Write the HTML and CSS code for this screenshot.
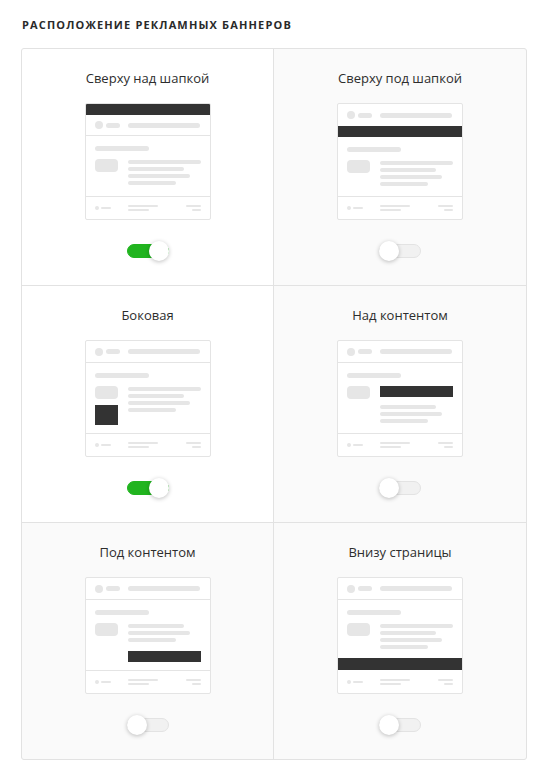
FILE: index.html
```html
<!DOCTYPE html>
<html lang="ru">
<head>
  <meta charset="UTF-8">
  <meta name="viewport" content="width=device-width, initial-scale=1.0">
  <title>Расположение рекламных баннеров</title>
  <link rel="stylesheet" href="styles.css">
</head>
<body>
  <h2 class="section-title">Расположение рекламных баннеров</h2>

  <div class="places">
    <!-- Сверху над шапкой -->
    <div class="place active">
      <div class="place-name">Сверху над шапкой</div>
      <div class="mock">
        <div class="ad ad-top"></div>
        <div class="mock-head">
          <span class="dot"></span><span class="bar bar-logo"></span><span class="bar bar-nav"></span>
        </div>
        <div class="mock-body">
          <span class="bar bar-title"></span>
          <div class="mock-row">
            <span class="thumb"></span>
            <div class="lines">
              <span class="bar l1"></span><span class="bar l2"></span><span class="bar l3"></span><span class="bar l4"></span>
            </div>
          </div>
        </div>
        <div class="mock-foot">
          <span class="fdot"></span><span class="fbar fb-logo"></span>
          <div class="fcol"><span class="fbar fb-a"></span><span class="fbar fb-b"></span></div>
          <div class="fcol fcol-right"><span class="fbar fb-c"></span><span class="fbar fb-d"></span></div>
        </div>
      </div>
      <div class="toggle on"><span class="knob"></span></div>
    </div>

    <!-- Сверху под шапкой -->
    <div class="place">
      <div class="place-name">Сверху под шапкой</div>
      <div class="mock">
        <div class="mock-head no-line">
          <span class="dot"></span><span class="bar bar-logo"></span><span class="bar bar-nav"></span>
        </div>
        <div class="ad ad-top"></div>
        <div class="mock-body">
          <span class="bar bar-title"></span>
          <div class="mock-row">
            <span class="thumb"></span>
            <div class="lines">
              <span class="bar l1"></span><span class="bar l2"></span><span class="bar l3"></span><span class="bar l4"></span>
            </div>
          </div>
        </div>
        <div class="mock-foot">
          <span class="fdot"></span><span class="fbar fb-logo"></span>
          <div class="fcol"><span class="fbar fb-a"></span><span class="fbar fb-b"></span></div>
          <div class="fcol fcol-right"><span class="fbar fb-c"></span><span class="fbar fb-d"></span></div>
        </div>
      </div>
      <div class="toggle"><span class="knob"></span></div>
    </div>

    <!-- Боковая -->
    <div class="place active">
      <div class="place-name">Боковая</div>
      <div class="mock">
        <div class="mock-head">
          <span class="dot"></span><span class="bar bar-logo"></span><span class="bar bar-nav"></span>
        </div>
        <div class="mock-body">
          <span class="bar bar-title"></span>
          <div class="mock-row">
            <div class="side">
              <span class="thumb"></span>
              <span class="ad ad-side"></span>
            </div>
            <div class="lines">
              <span class="bar l1"></span><span class="bar l2"></span><span class="bar l3"></span><span class="bar l4"></span>
            </div>
          </div>
        </div>
        <div class="mock-foot">
          <span class="fdot"></span><span class="fbar fb-logo"></span>
          <div class="fcol"><span class="fbar fb-a"></span><span class="fbar fb-b"></span></div>
          <div class="fcol fcol-right"><span class="fbar fb-c"></span><span class="fbar fb-d"></span></div>
        </div>
      </div>
      <div class="toggle on"><span class="knob"></span></div>
    </div>

    <!-- Над контентом -->
    <div class="place">
      <div class="place-name">Над контентом</div>
      <div class="mock">
        <div class="mock-head">
          <span class="dot"></span><span class="bar bar-logo"></span><span class="bar bar-nav"></span>
        </div>
        <div class="mock-body">
          <span class="bar bar-title"></span>
          <div class="mock-row">
            <span class="thumb"></span>
            <div class="lines">
              <span class="ad ad-content"></span>
              <span class="bar l2"></span><span class="bar l3"></span><span class="bar l4"></span>
            </div>
          </div>
        </div>
        <div class="mock-foot">
          <span class="fdot"></span><span class="fbar fb-logo"></span>
          <div class="fcol"><span class="fbar fb-a"></span><span class="fbar fb-b"></span></div>
          <div class="fcol fcol-right"><span class="fbar fb-c"></span><span class="fbar fb-d"></span></div>
        </div>
      </div>
      <div class="toggle"><span class="knob"></span></div>
    </div>

    <!-- Под контентом -->
    <div class="place">
      <div class="place-name">Под контентом</div>
      <div class="mock">
        <div class="mock-head">
          <span class="dot"></span><span class="bar bar-logo"></span><span class="bar bar-nav"></span>
        </div>
        <div class="mock-body">
          <span class="bar bar-title"></span>
          <div class="mock-row">
            <span class="thumb"></span>
            <div class="lines">
              <span class="bar l2"></span><span class="bar l3"></span><span class="bar l4"></span>
              <span class="ad ad-under"></span>
            </div>
          </div>
        </div>
        <div class="mock-foot">
          <span class="fdot"></span><span class="fbar fb-logo"></span>
          <div class="fcol"><span class="fbar fb-a"></span><span class="fbar fb-b"></span></div>
          <div class="fcol fcol-right"><span class="fbar fb-c"></span><span class="fbar fb-d"></span></div>
        </div>
      </div>
      <div class="toggle"><span class="knob"></span></div>
    </div>

    <!-- Внизу страницы -->
    <div class="place">
      <div class="place-name">Внизу страницы</div>
      <div class="mock">
        <div class="mock-head">
          <span class="dot"></span><span class="bar bar-logo"></span><span class="bar bar-nav"></span>
        </div>
        <div class="mock-body">
          <span class="bar bar-title"></span>
          <div class="mock-row">
            <span class="thumb"></span>
            <div class="lines">
              <span class="bar l1"></span><span class="bar l2"></span><span class="bar l3"></span><span class="bar l4"></span>
            </div>
          </div>
        </div>
        <div class="ad ad-bottom"></div>
        <div class="mock-foot no-line">
          <span class="fdot"></span><span class="fbar fb-logo"></span>
          <div class="fcol"><span class="fbar fb-a"></span><span class="fbar fb-b"></span></div>
          <div class="fcol fcol-right"><span class="fbar fb-c"></span><span class="fbar fb-d"></span></div>
        </div>
      </div>
      <div class="toggle"><span class="knob"></span></div>
    </div>
  </div>
</body>
</html>
```

FILE: styles.css
```css
body {
  margin: 0;
  padding: 16px 20px 16px 21px;
  font-family: "Open Sans", Arial, sans-serif;
  color: #333;
  background: #fff;
}
.section-title {
  margin: 0 0 14px 1px;
  font-size: 11px;
  line-height: 18px;
  font-weight: 700;
  letter-spacing: 1.15px;
  text-transform: uppercase;
  color: #2a2a2a;
}
.places {
  width: 504px;
  display: grid;
  grid-template-columns: 251px 252px;
  border: 1px solid #e2e2e2;
  border-radius: 3px;
  overflow: hidden;
  gap: 1px;
  background: #e2e2e2;
}
.place {
  background: #fafafa;
  height: 236px;
  padding-top: 20px;
  box-sizing: border-box;
  display: flex;
  flex-direction: column;
  align-items: center;
}
.place.active {
  background: #fff;
}
.place-name {
  font-size: 13px;
  line-height: 18px;
  color: #2d2d2d;
  margin-bottom: 16px;
}

/* page preview */
.mock {
  width: 126px;
  height: 117px;
  box-sizing: border-box;
  border: 1px solid #e4e4e4;
  border-radius: 2px;
  background: #fff;
  display: flex;
  flex-direction: column;
  overflow: hidden;
}
.mock .bar, .mock .dot, .mock .thumb, .mock .fbar, .mock .fdot {
  display: block;
  background: #e6e6e6;
}
.mock-head {
  height: 22px;
  flex: none;
  box-sizing: border-box;
  border-bottom: 1px solid #e4e4e4;
  display: flex;
  align-items: center;
  padding: 0 9px;
}
.mock-head.no-line {
  border-bottom: none;
}
.dot {
  width: 8px;
  height: 8px;
  border-radius: 50%;
}
.bar {
  height: 5px;
  border-radius: 3px;
}
.bar-logo {
  width: 14px;
  margin-left: 3px;
}
.bar-nav {
  width: 72px;
  margin-left: 8px;
}
.mock-body {
  flex: 1;
  min-height: 0;
  padding: 10px 9px 0;
}
.bar-title {
  width: 54px;
  margin-bottom: 8px;
}
.mock-row {
  display: flex;
  align-items: flex-start;
  gap: 10px;
}
.thumb {
  width: 23px;
  height: 13px;
  border-radius: 4px;
  flex: none;
}
.side {
  display: flex;
  flex-direction: column;
  gap: 6px;
}
.lines {
  display: flex;
  flex-direction: column;
  gap: 3px;
  padding-top: 1px;
}
.lines .bar {
  height: 4px;
  border-radius: 2px;
}
.l1 { width: 73px; }
.l2 { width: 56px; }
.l3 { width: 62px; }
.l4 { width: 48px; }

.ad {
  display: block;
  background: #333;
}
.ad-top {
  height: 11px;
  flex: none;
}
.ad-top + .mock-head {
  height: 21px;
}
.ad-side {
  width: 23px;
  height: 20px;
}
.ad-content {
  width: 73px;
  height: 11px;
  margin: -1px 0 5px;
}
.ad-under {
  width: 73px;
  height: 11px;
  margin-top: 6px;
}
.ad-bottom {
  height: 12px;
  flex: none;
}

.mock-foot {
  height: 23px;
  flex: none;
  box-sizing: border-box;
  border-top: 1px solid #e4e4e4;
  display: flex;
  align-items: center;
  padding: 0 9px;
}
.mock-foot.no-line {
  border-top: none;
}
.fdot {
  width: 4px;
  height: 4px;
  border-radius: 50%;
}
.fbar {
  height: 2px;
  border-radius: 1px;
}
.fb-logo {
  width: 10px;
  margin-left: 2px;
}
.fcol {
  display: flex;
  flex-direction: column;
  gap: 2px;
  margin-left: 17px;
}
.fcol-right {
  margin-left: auto;
  align-items: flex-end;
}
.fb-a { width: 30px; }
.fb-b { width: 21px; }
.fb-c { width: 15px; }
.fb-d { width: 9px; }

/* switch */
.toggle {
  position: relative;
  width: 42px;
  height: 14px;
  margin-top: 24px;
  box-sizing: border-box;
  border: 1px solid #e3e3e3;
  border-radius: 7px;
  background: #f1f1f1;
}
.toggle.on {
  background: #21b41f;
  border-color: #21b41f;
}
.knob {
  position: absolute;
  top: -4px;
  left: -1px;
  width: 20px;
  height: 20px;
  border-radius: 50%;
  background: #fff;
  box-shadow: 0 1px 4px rgba(0, 0, 0, 0.25);
}
.toggle.on .knob {
  left: auto;
  right: -1px;
}
```
